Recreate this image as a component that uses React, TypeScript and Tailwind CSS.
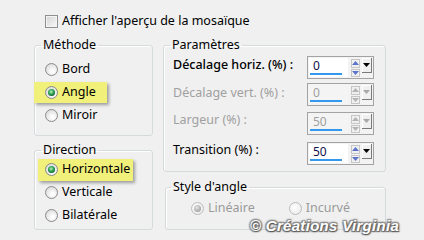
import React from "react";

const font = { fontFamily: '"Noto Sans", "Open Sans", sans-serif' };

function Radio({ checked, disabled }: { checked?: boolean; disabled?: boolean }) {
  return (
    <span
      className={
        "relative flex h-[13px] w-[13px] shrink-0 items-center justify-center rounded-full border " +
        (disabled ? "border-[#bcbcbc] bg-[radial-gradient(circle_at_40%_40%,#ffffff,#e6e6e6)]" : "border-[#8a8a8a] bg-[radial-gradient(circle_at_60%_65%,#ffffff_10%,#d6d6d6_90%)]")
      }
    >
      {checked && (
        <span
          className={
            "h-[7px] w-[7px] rounded-full " +
            (disabled
              ? "bg-[radial-gradient(circle_at_40%_35%,#e4e4e4,#a8a8a8_70%,#909090)]"
              : "bg-[radial-gradient(circle_at_45%_40%,#b8f0b8,#2aa152_45%,#0e3b1d_90%)]")
          }
        />
      )}
    </span>
  );
}

function Tri({ dir, color }: { dir: "up" | "down"; color: string }) {
  return (
    <svg width="7" height="4" viewBox="0 0 7 4">
      {dir === "up" ? <path d="M0 4 L3.5 0 L7 4 Z" fill={color} /> : <path d="M0 0 L7 0 L3.5 4 Z" fill={color} />}
    </svg>
  );
}

function Spin({ value, disabled }: { value: string; disabled?: boolean }) {
  const arrow = disabled ? "#b4b4b4" : "#5b73c8";
  return (
    <div className="flex h-[23px] w-[67px] shrink-0 border border-[#a3a3a3] bg-[#f3f3f3] p-[1px]">
      <div className={"flex w-[40px] flex-col " + (disabled ? "bg-[#f4f4f4]" : "bg-white")}>
        <span className={"pl-[4px] pt-[1px] text-[12px] leading-[14px] " + (disabled ? "text-[#a0a0a0]" : "text-[#10104a]")}>{value}</span>
        <span className="mb-[2px] ml-[1px] mt-auto h-[3px] w-[32px] bg-[#3399ee]" />
      </div>
      <div className="ml-[3px] flex w-[10px] flex-col gap-[1px] pt-[1px]">
        <div className="flex h-[9px] items-center justify-center border border-[#c6c6c6] bg-[#f0f0f0]">
          <Tri dir="up" color={arrow} />
        </div>
        <div className="flex h-[9px] items-center justify-center border border-[#c6c6c6] bg-[#f0f0f0]">
          <Tri dir="down" color={arrow} />
        </div>
      </div>
      <div className="ml-[2px] mb-[4px] flex w-[10px] items-center justify-center border-b border-r border-[#7a7a7a] bg-[#f0f0f0] shadow-[inset_1px_1px_0_#ffffff]">
        <Tri dir="down" color={disabled ? "#a8a8a8" : "#000000"} />
      </div>
    </div>
  );
}

export default function App() {
  return (
    <div className="relative h-[240px] w-[424px] overflow-hidden bg-[#f0f0f0] text-[12.5px] text-black" style={font}>
      <div className="flex items-center gap-[4px] pl-[45px] pt-[13px]">
        <span className="h-[13px] w-[13px] border border-[#8e8f8f] bg-[linear-gradient(135deg,#d4d4d4,#f8f8f8)] shadow-[inset_0_0_0_1px_#f4f4f4]" />
        <span className="leading-[16px]">Afficher l'aperçu de la mosaïque</span>
      </div>

      <div className="mt-[8px] flex">
        <div className="ml-[34px] flex w-[119px] flex-col">
          <fieldset className="rounded-[3px] border border-[#d5dadd] px-0 pb-[8px] pl-[10px] pt-0 shadow-[inset_1px_1px_0_#ffffff]">
            <legend className="ml-[-4px] px-[2px] leading-[16px]">Méthode</legend>
            <div className="flex flex-col pt-[5px]">
              <div className="flex h-[23px] items-center gap-[4px]">
                <Radio />
                <span>Bord</span>
              </div>
              <div className="flex h-[23px] items-center">
                <div className="ml-[-11px] flex h-[21px] items-center gap-[4px] bg-[#f0f07a] pl-[11px] pr-[11px] shadow-[2px_2px_3px_rgba(0,0,0,0.35)]">
                  <Radio checked />
                  <span>Angle</span>
                </div>
              </div>
              <div className="flex h-[23px] items-center gap-[4px]">
                <Radio />
                <span>Miroir</span>
              </div>
            </div>
          </fieldset>
          <fieldset className="mt-[7px] rounded-[3px] border border-[#d5dadd] px-0 pb-[2px] pl-[10px] pt-0 shadow-[inset_1px_1px_0_#ffffff]">
            <legend className="ml-[-4px] px-[2px] leading-[14px]">Direction</legend>
            <div className="flex flex-col pt-[1px]">
              <div className="flex h-[23px] items-center">
                <div className="ml-[-7px] flex h-[22px] items-center gap-[4px] bg-[#f0f07a] pl-[7px] pr-[3px] shadow-[2px_2px_3px_rgba(0,0,0,0.35)]">
                  <Radio checked />
                  <span>Horizontale</span>
                </div>
              </div>
              <div className="flex h-[23px] items-center gap-[4px]">
                <Radio />
                <span>Verticale</span>
              </div>
              <div className="flex h-[23px] items-center gap-[4px]">
                <Radio />
                <span>Bilatérale</span>
              </div>
            </div>
          </fieldset>
        </div>

        <div className="ml-[10px] flex w-[223px] flex-col">
          <fieldset className="rounded-[3px] border border-[#d5dadd] px-0 pb-[6px] pl-[9px] pr-[11px] pt-0 shadow-[inset_1px_1px_0_#ffffff]">
            <legend className="ml-[-3px] px-[2px] leading-[16px]">Paramètres</legend>
            <div className="flex flex-col pt-[3px]">
              <div className="flex items-start justify-between">
                <span className="pt-[1px] font-medium leading-[16px]">Décalage horiz. (%) :</span>
                <Spin value="0" />
              </div>
              <div className="mt-[4px] flex items-start justify-between">
                <span className="pt-[2px] leading-[16px] text-[#a0a0a0]">Décalage vert. (%) :</span>
                <Spin value="0" disabled />
              </div>
              <div className="mt-[6px] flex items-start justify-between">
                <span className="pt-[0px] leading-[16px] text-[#a0a0a0]">Largeur (%) :</span>
                <Spin value="50" disabled />
              </div>
              <div className="mt-[7px] flex items-start justify-between">
                <span className="pt-[0px] leading-[16px]">Transition (%) :</span>
                <Spin value="50" />
              </div>
            </div>
          </fieldset>
          <fieldset className="ml-[2px] mt-[7px] rounded-[3px] border border-[#d5dadd] px-0 pb-[13px] pt-0 shadow-[inset_1px_1px_0_#ffffff]">
            <legend className="ml-[5px] px-[2px] leading-[16px]">Style d'angle</legend>
            <div className="box-content flex h-[16px] items-center pl-[25px] pt-[5px]">
              <div className="flex items-center gap-[4px] text-[#9a9a9a]">
                <Radio checked disabled />
                <span>Linéaire</span>
              </div>
              <div className="ml-[34px] flex items-center gap-[4px] text-[#9a9a9a]">
                <Radio disabled />
                <span>Incurvé</span>
              </div>
            </div>
          </fieldset>
        </div>
      </div>

      <div
        className="pointer-events-none absolute left-[250px] top-[215px] whitespace-nowrap text-[15px] font-bold italic tracking-[0.3px] text-white"
        style={{ fontFamily: '"Liberation Sans", sans-serif', textShadow: "1px 1px 1px #555, -1px -1px 1px #888, 1px -1px 1px #888, -1px 1px 1px #777, 0 0 3px #666" }}
      >
        © Créations Virginia
      </div>
    </div>
  );
}
